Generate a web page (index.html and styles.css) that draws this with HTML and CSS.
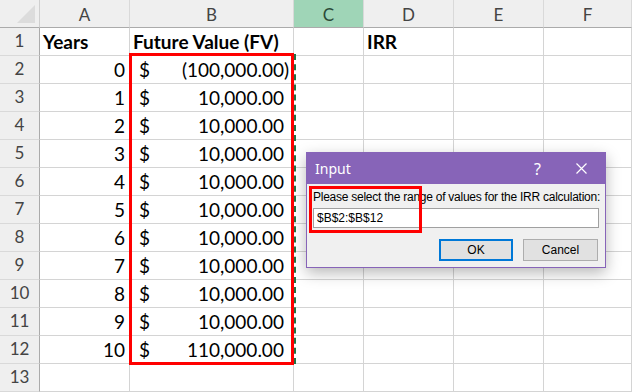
FILE: index.html
```html
<!DOCTYPE html>
<html>
<head>
<meta charset="utf-8">
<link rel="stylesheet" href="styles.css">
</head>
<body>
<div class="sheet">
  <div class="grid">
    <div class="corner"><span class="tri"></span></div>
    <div class="colhead">A</div>
    <div class="colhead">B</div>
    <div class="colhead sel">C</div>
    <div class="colhead">D</div>
    <div class="colhead">E</div>
    <div class="colhead">F</div>

    <div class="rowhead">1</div>
    <div class="cell bold">Years</div>
    <div class="cell bold">Future Value (FV)</div>
    <div class="cell"></div>
    <div class="cell bold">IRR</div>
    <div class="cell"></div>
    <div class="cell"></div>

    <div class="rowhead">2</div>
    <div class="cell num">0</div>
    <div class="cell acct"><span>$</span><span>(100,000.00)</span></div>
    <div class="cell"></div><div class="cell"></div><div class="cell"></div><div class="cell"></div>

    <div class="rowhead">3</div>
    <div class="cell num">1</div>
    <div class="cell acct"><span>$</span><span>10,000.00<i class="pad">)</i></span></div>
    <div class="cell"></div><div class="cell"></div><div class="cell"></div><div class="cell"></div>

    <div class="rowhead">4</div>
    <div class="cell num">2</div>
    <div class="cell acct"><span>$</span><span>10,000.00<i class="pad">)</i></span></div>
    <div class="cell"></div><div class="cell"></div><div class="cell"></div><div class="cell"></div>

    <div class="rowhead">5</div>
    <div class="cell num">3</div>
    <div class="cell acct"><span>$</span><span>10,000.00<i class="pad">)</i></span></div>
    <div class="cell"></div><div class="cell"></div><div class="cell"></div><div class="cell"></div>

    <div class="rowhead">6</div>
    <div class="cell num">4</div>
    <div class="cell acct"><span>$</span><span>10,000.00<i class="pad">)</i></span></div>
    <div class="cell"></div><div class="cell"></div><div class="cell"></div><div class="cell"></div>

    <div class="rowhead">7</div>
    <div class="cell num">5</div>
    <div class="cell acct"><span>$</span><span>10,000.00<i class="pad">)</i></span></div>
    <div class="cell"></div><div class="cell"></div><div class="cell"></div><div class="cell"></div>

    <div class="rowhead">8</div>
    <div class="cell num">6</div>
    <div class="cell acct"><span>$</span><span>10,000.00<i class="pad">)</i></span></div>
    <div class="cell"></div><div class="cell"></div><div class="cell"></div><div class="cell"></div>

    <div class="rowhead">9</div>
    <div class="cell num">7</div>
    <div class="cell acct"><span>$</span><span>10,000.00<i class="pad">)</i></span></div>
    <div class="cell"></div><div class="cell"></div><div class="cell"></div><div class="cell"></div>

    <div class="rowhead">10</div>
    <div class="cell num">8</div>
    <div class="cell acct"><span>$</span><span>10,000.00<i class="pad">)</i></span></div>
    <div class="cell"></div><div class="cell"></div><div class="cell"></div><div class="cell"></div>

    <div class="rowhead">11</div>
    <div class="cell num">9</div>
    <div class="cell acct"><span>$</span><span>10,000.00<i class="pad">)</i></span></div>
    <div class="cell"></div><div class="cell"></div><div class="cell"></div><div class="cell"></div>

    <div class="rowhead">12</div>
    <div class="cell num">10</div>
    <div class="cell acct"><span>$</span><span>110,000.00<i class="pad">)</i></span></div>
    <div class="cell"></div><div class="cell"></div><div class="cell"></div><div class="cell"></div>

    <div class="rowhead">13</div>
    <div class="cell"></div>
    <div class="cell"></div>
    <div class="cell"></div><div class="cell"></div><div class="cell"></div><div class="cell"></div>
  </div>

  <div class="marquee"></div>
  <div class="highlight range-box"></div>

  <div class="dialog">
    <div class="titlebar">
      <span class="title">Input</span>
      <span class="help">?</span>
      <svg class="close" width="11" height="11" viewBox="0 0 11 11"><path d="M0.5 0.5 L10.5 10.5 M10.5 0.5 L0.5 10.5" stroke="#fff" stroke-width="1.2" fill="none"/></svg>
    </div>
    <div class="body">
      <div class="label">Please select the range of values for the IRR calculation:</div>
      <div class="input">$B$2:$B$12</div>
      <div class="buttons">
        <div class="btn default">OK</div>
        <div class="btn">Cancel</div>
      </div>
      <div class="highlight label-box"></div>
    </div>
  </div>
</div>
</body>
</html>
```

FILE: styles.css
```css
* { box-sizing: border-box; }
html, body { margin: 0; padding: 0; background: #fff; overflow: hidden; }

.sheet {
  position: relative;
  width: 632px;
  height: 392px;
  overflow: hidden;
  font-family: Lato, "Open Sans", sans-serif;
}

.grid {
  display: grid;
  grid-template-columns: 40px 90px 164px 70px 90px 90px 88px;
  grid-auto-rows: 28px;
}

.corner {
  background: #efefef;
  border-right: 1px solid #cfcfcf;
  border-bottom: 1px solid #ababab;
  position: relative;
}
.tri {
  position: absolute;
  right: 4px;
  bottom: 4px;
  width: 0;
  height: 0;
  border-left: 18px solid transparent;
  border-bottom: 18px solid #dcdcdc;
}

.colhead {
  background: #efefef;
  border-right: 1px solid #d9d9d9;
  border-bottom: 1px solid #ababab;
  color: #444;
  font-size: 17px;
  display: flex;
  align-items: center;
  justify-content: center;
  padding-top: 2px;
}
.colhead.sel {
  background: #9fd5b7;
  color: #2b4a38;
}

.rowhead {
  background: #efefef;
  border-right: 1px solid #ababab;
  border-bottom: 1px solid #d9d9d9;
  color: #444;
  font-size: 17px;
  display: flex;
  align-items: flex-end;
  justify-content: center;
  padding-bottom: 4px;
  line-height: 20px;
}

.cell {
  border-right: 1px solid #d4d4d4;
  border-bottom: 1px solid #d4d4d4;
  font-size: 19px;
  color: #000;
  display: flex;
  align-items: flex-end;
  line-height: 20px;
  padding: 0 3px 3px 3px;
  white-space: nowrap;
}
.cell.bold { font-weight: 700; }
.cell.num { justify-content: flex-end; padding-right: 4px; }
.cell.acct { justify-content: space-between; padding-left: 9px; padding-right: 4px; }
.pad { visibility: hidden; font-style: normal; }

.marquee {
  position: absolute;
  left: 129px;
  top: 54px;
  width: 167px;
  height: 310px;
  border: 2px dashed #217346;
}
.highlight {
  position: absolute;
  border: 3px solid #ff0000;
}
.range-box {
  left: 129px;
  top: 53px;
  width: 165px;
  height: 312px;
}

.dialog {
  position: absolute;
  left: 306px;
  top: 152px;
  width: 300px;
  height: 116px;
  background: #f0f0f0;
  border: 1px solid #8764b8;
  box-shadow: 0 5px 14px rgba(0,0,0,0.28);
  font-family: "Liberation Sans", Arial, sans-serif;
  color: #000;
}
.titlebar {
  height: 31px;
  background: #8764b8;
  color: #fff;
  display: flex;
  align-items: center;
  padding: 0 0 0 8px;
}
.title { font-family: "Noto Sans", sans-serif; font-size: 14px; flex: 1; }
.help { font-family: "Noto Sans", sans-serif; font-size: 16px; margin-right: 35px; }
.close { margin-right: 18px; }

.body {
  position: relative;
  padding: 5px 6px 0 6px;
  display: flex;
  flex-direction: column;
}
.label { font-size: 12px; line-height: 17px; white-space: nowrap; letter-spacing: -0.25px; }
.input {
  margin-top: 2px;
  height: 20px;
  background: #fff;
  border: 1px solid #a0a0a0;
  font-size: 12px;
  line-height: 18px;
  padding-left: 3px;
  width: 286px;
}
.buttons {
  display: flex;
  justify-content: flex-end;
  gap: 10px;
  margin-top: 11px;
  padding-right: 1px;
}
.btn {
  width: 75px;
  height: 22px;
  background: #e1e1e1;
  border: 1px solid #adadad;
  font-size: 12px;
  display: flex;
  align-items: center;
  justify-content: center;
}
.btn.default { border: 2px solid #0078d7; width: 74px; }
.label-box {
  left: 2px;
  top: 2px;
  width: 113px;
  height: 47px;
}
```
